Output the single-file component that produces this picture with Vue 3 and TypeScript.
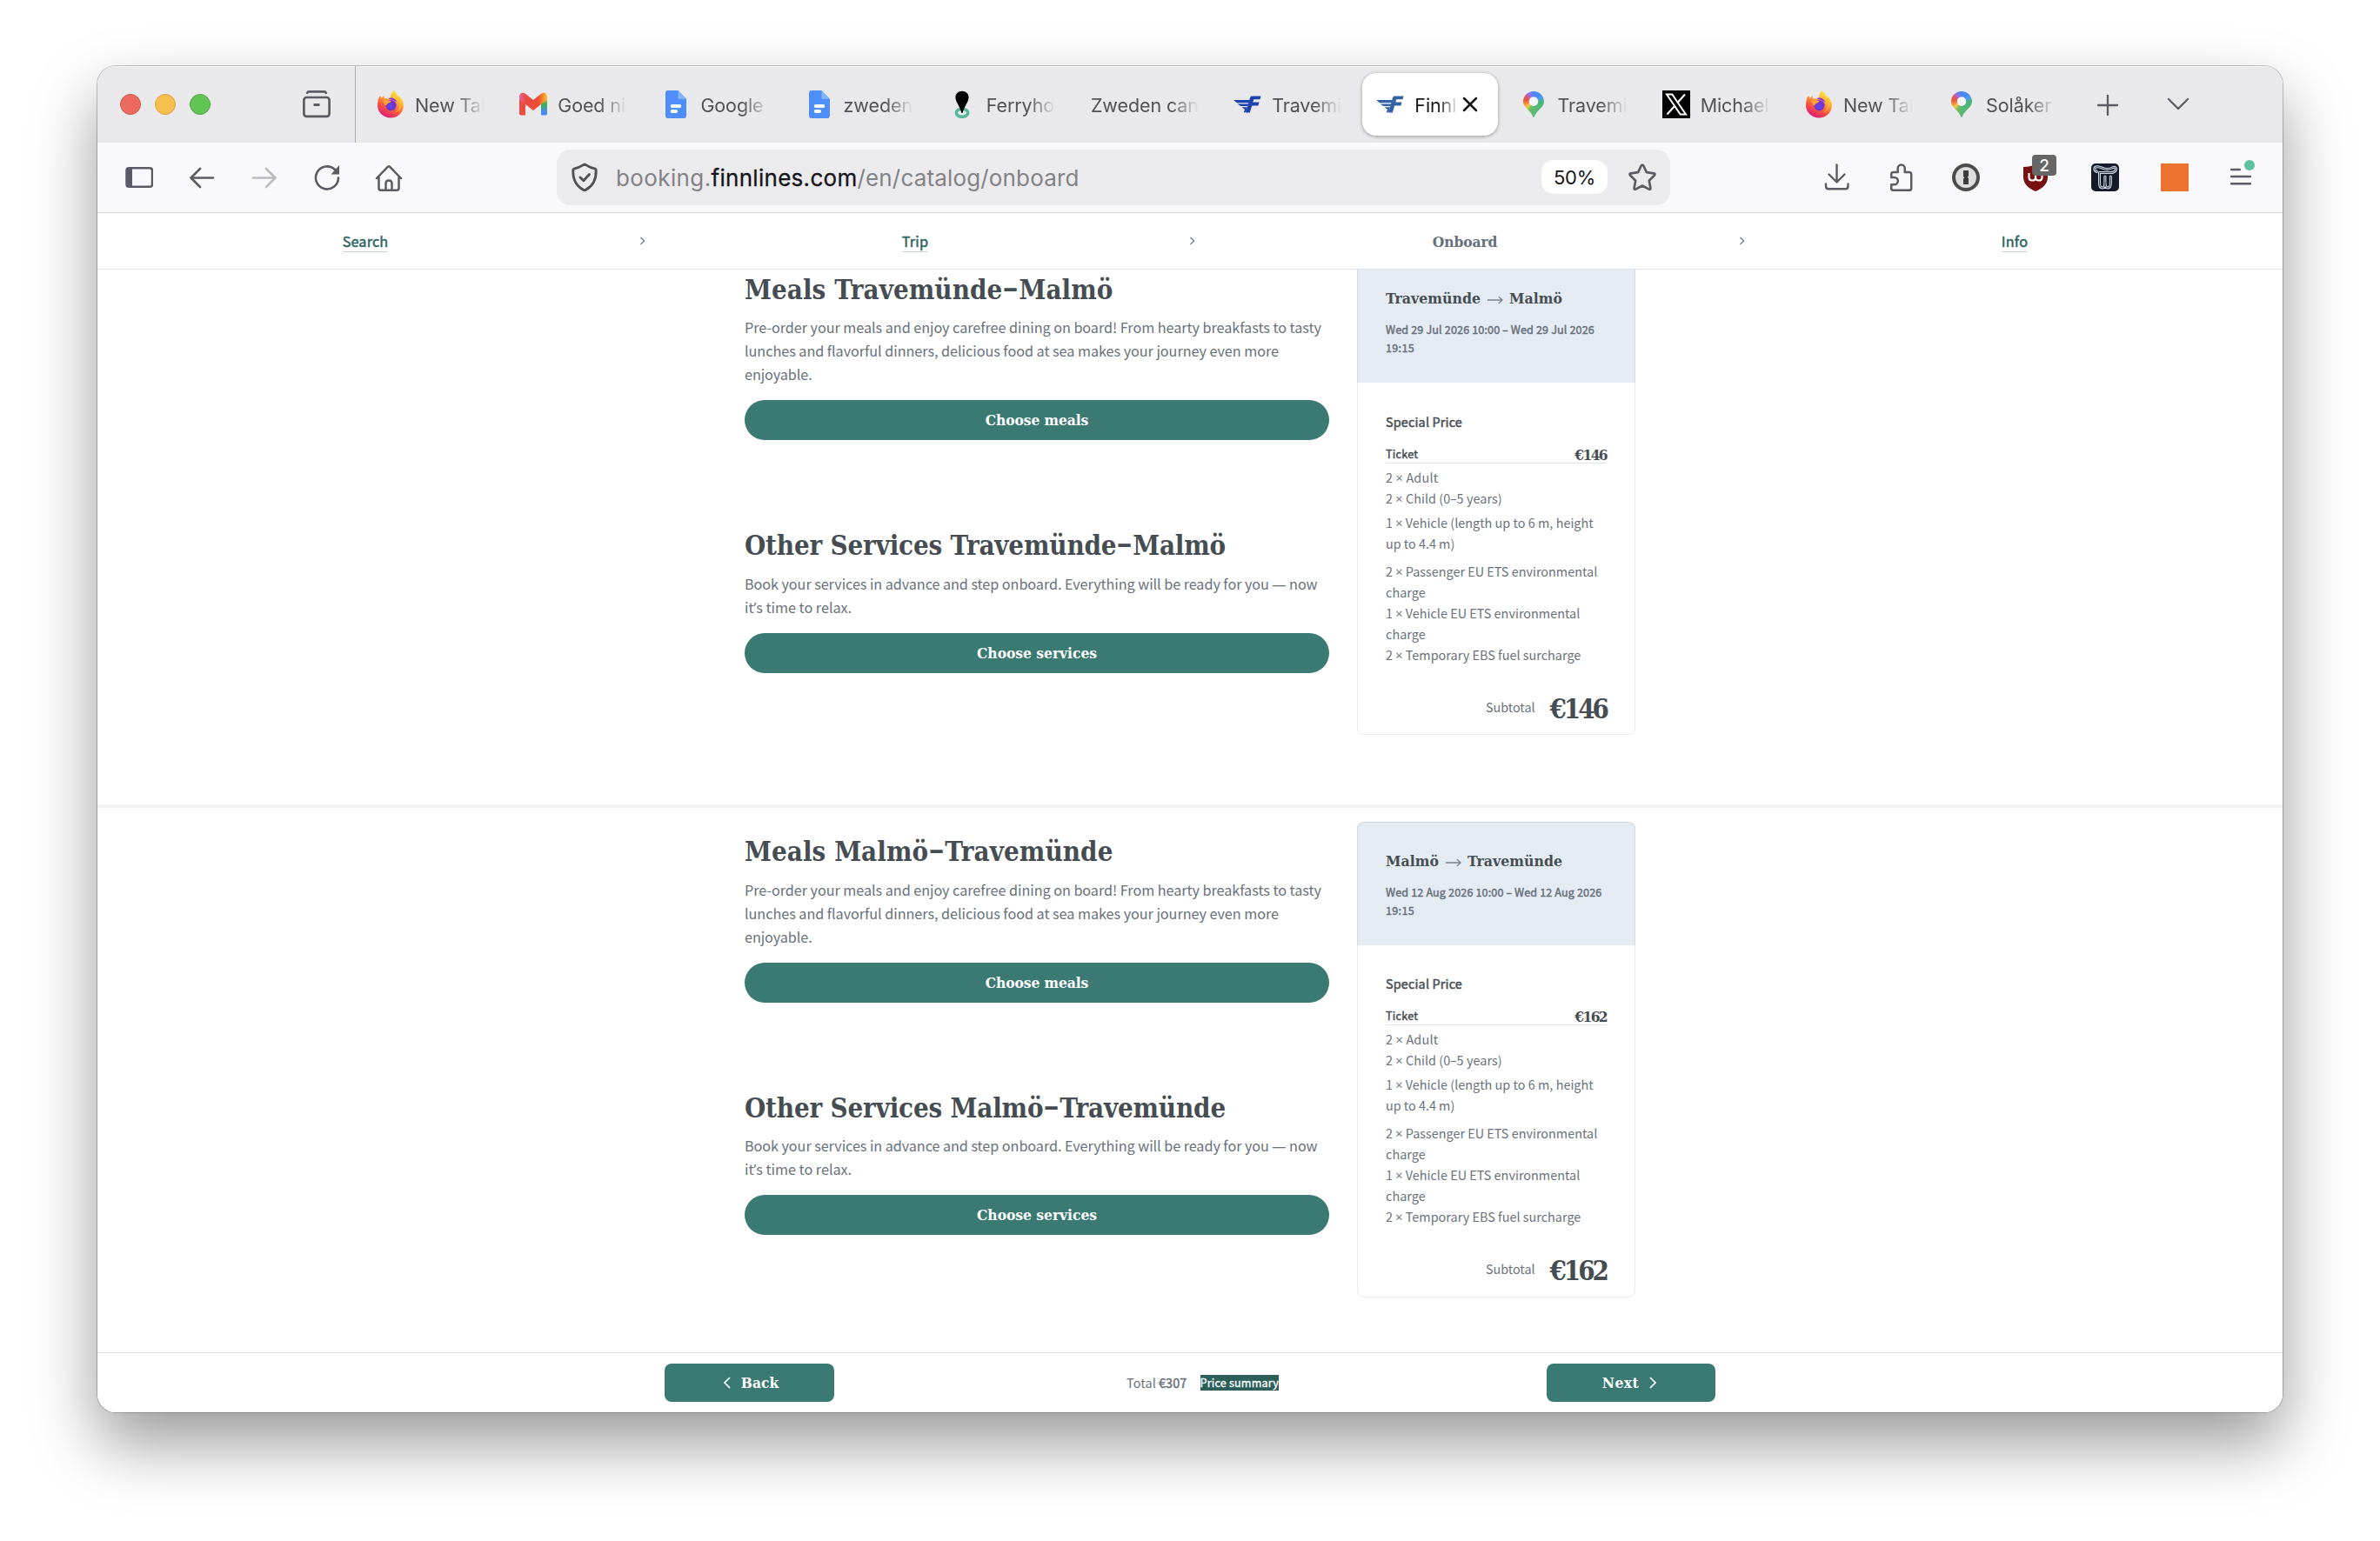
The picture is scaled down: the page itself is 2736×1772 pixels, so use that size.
<script setup lang="ts">
import { defineComponent, h, onMounted, ref } from 'vue'

// One line of text whose tracking is tuned to a given advance width.
const Fit = defineComponent({
  props: { text: { type: String, required: true }, w: { type: Number, required: true } },
  setup(props) {
    const el = ref<HTMLElement | null>(null)
    onMounted(() => {
      const node = el.value
      if (!node) return
      const natural = node.getBoundingClientRect().width
      node.style.letterSpacing = `${(props.w + 1 - natural) / props.text.length}px`
    })
    return () =>
      h(
        'span',
        { ref: el, class: 'fit' },
        props.text.split(/([×’—–])/).map((part) => (/^[×’—–]$/.test(part) ? h('span', { class: 'sym' }, part) : part)),
      )
  },
})

interface Tab { title: string; icon: string; active?: boolean }
const tabs: Tab[] = [
  { title: 'New Tab', icon: 'firefox' },
  { title: 'Goed ni', icon: 'gmail' },
  { title: 'Google', icon: 'docs' },
  { title: 'zweden', icon: 'docs' },
  { title: 'Ferryho', icon: 'ferry' },
  { title: 'Zweden can', icon: '' },
  { title: 'Travemi', icon: 'finn' },
  { title: 'Finnl', icon: 'finn2', active: true },
  { title: 'Travemi', icon: 'maps' },
  { title: 'Michael', icon: 'x' },
  { title: 'New Tab', icon: 'firefox' },
  { title: 'Solåker', icon: 'maps' },
]

const steps = [
  { label: 'Search', w: 51.7 },
  { label: 'Trip', w: 29.5 },
  { label: 'Onboard', w: 73.5, current: true },
  { label: 'Info', w: 29.5 },
]

type Line = [string, number]
interface Leg {
  meals: Line; other: Line; from: Line; to: Line; dates: Line; price: string
}
const legs: Leg[] = [
  {
    meals: ['Meals Travemünde–Malmö', 422.5], other: ['Other Services Travemünde–Malmö', 552],
    from: ['Travemünde', 108], to: ['Malmö', 60], dates: ['Wed 29 Jul 2026 10:00 – Wed 29 Jul 2026', 239], price: '€146',
  },
  {
    meals: ['Meals Malmö–Travemünde', 422.5], other: ['Other Services Malmö–Travemünde', 552],
    from: ['Malmö', 60], to: ['Travemünde', 108], dates: ['Wed 12 Aug 2026 10:00 – Wed 12 Aug 2026', 247.5], price: '€162',
  },
]
const mealsText: Line[] = [
  ['Pre-order your meals and enjoy carefree dining on board! From hearty breakfasts to tasty', 662],
  ['lunches and flavorful dinners, delicious food at sea makes your journey even more', 613],
  ['enjoyable.', 76.7],
]
const otherText: Line[] = [
  ['Book your services in advance and step onboard. Everything will be ready for you — now', 657.5],
  ['it’s time to relax.', 122],
]
const items: Line[][] = [
  [['2 × Adult', 59.3], ['2 × Child (0–5 years)', 132.7]],
  [['1 × Vehicle (length up to 6 m, height', 237.7], ['up to 4.4 m)', 78.3]],
  [
    ['2 × Passenger EU ETS environmental', 242.3], ['charge', 44.7],
    ['1 × Vehicle EU ETS environmental', 222.3], ['charge', 44.7],
    ['2 × Temporary EBS fuel surcharge', 223.3],
  ],
]
</script>

<template>
  <div class="desktop">
    <svg class="defs" width="0" height="0">
      <defs>
        <linearGradient id="ffBody" x1="0.8" y1="0" x2="0.3" y2="1">
          <stop offset="0" stop-color="#fff14f" /><stop offset="0.35" stop-color="#ffb02e" />
          <stop offset="0.65" stop-color="#fb5a3c" /><stop offset="1" stop-color="#d9157a" />
        </linearGradient>
        <radialGradient id="ffGlobe" cx="0.5" cy="0.6" r="0.6">
          <stop offset="0" stop-color="#5a4be0" /><stop offset="0.6" stop-color="#7035d0" /><stop offset="1" stop-color="#a932d8" />
        </radialGradient>
        <linearGradient id="gmR" x1="0" y1="0" x2="0" y2="1"><stop offset="0.05" stop-color="#fbc02d" /><stop offset="0.45" stop-color="#35b25a" /><stop offset="0.85" stop-color="#4a8af8" /></linearGradient>
        <linearGradient id="gmM" x1="0" y1="0" x2="1" y2="0"><stop offset="0" stop-color="#e8609a" /><stop offset="0.25" stop-color="#ea4a3d" /><stop offset="0.7" stop-color="#ee5035" /><stop offset="1" stop-color="#fcc52c" /></linearGradient>
      </defs>
    </svg>
    <div class="window">
      <header class="tabbar">
        <div class="lights"><i class="red" /><i class="yellow" /><i class="green" /></div>
        <svg class="archive" width="32" height="32" viewBox="0 0 32 32" fill="none" stroke="#5b5b66" stroke-width="2.7" stroke-linecap="round">
          <path d="M5.2 2.8C5.6 1.8 6.4 1.4 7.6 1.4H24.4C25.6 1.4 26.4 1.8 26.8 2.8" /><rect x="1.4" y="8" width="29.2" height="21.8" rx="3" /><path d="M12.5 16.6h7" stroke-linecap="butt" stroke-width="3" />
        </svg>
        <nav class="tabs">
          <div v-for="(t, i) in tabs" :key="i" class="tab" :class="{ active: t.active }">
            <svg v-if="t.icon" class="fav" width="32" height="32" viewBox="0 0 32 32">
              <template v-if="t.icon === 'firefox'">
                <path d="M19.5 0c2 1.600 3.400 3.400 4 5.200 4.800 3 7.300 7.200 7.300 12.200C30.800 25.500 24.300 31.500 16 31.500S1 25 1 17c0-4.500 1-9 3-11l1.500 3L8.500 6l.5 3.500c2.500-.4 5 .2 6.500 1C15.300 7 16.500 2.500 19.500 0z" fill="url(#ffBody)" />
                <circle cx="16.400" cy="17" r="6.300" fill="url(#ffGlobe)" />
                <path d="M7 11.500c3-1.500 6 .8 9.500.3 0 2.200-2.500 2.700-4.300 3.500-.4 1.500-1.700 2.300-2.700 1.500z" fill="#ffa436" />
                <path d="M13 9c4-1.500 9 0 10.500 5-3.500-3.500-6.500-3-10.500-5z" fill="#8a35dd" />
                <path d="M25 9c3.500 6 2 13-4 16.500 6.500-1.500 9.300-9 4-16.500z" fill="#ffd83a" opacity=".7" />
              </template>
              <template v-else-if="t.icon === 'gmail'">
                <path d="M0 6v20.500c0 1.200.8 2 2 2h5V11.500z" fill="#ea4c3f" />
                <path d="M32 6v20.500c0 1.200-.8 2-2 2h-5V11.500z" fill="url(#gmR)" />
                <path d="M0 7C0 3 4 1.600 6.600 3.500L16 11l9.400-7.500C28 1.600 32 3 32 7v3.500L16 23 0 10.500z" fill="url(#gmM)" />
              </template>
              <template v-else-if="t.icon === 'docs'">
                <path d="M7 0h11.500L28 9.800V29a3 3 0 0 1-3 3H7a3 3 0 0 1-3-3V3a3 3 0 0 1 3-3z" fill="#4f8df7" />
                <path d="M18.500 0L28 9.800h-8a1.500 1.500 0 0 1-1.500-1.500z" fill="#83b6fb" />
                <rect x="9.800" y="16" width="12.400" height="4" rx="2" fill="#fff" /><rect x="9.800" y="22" width="8.200" height="4" rx="2" fill="#fff" />
              </template>
              <template v-else-if="t.icon === 'ferry'">
                <ellipse cx="16" cy="25.800" rx="6.700" ry="4.500" fill="none" stroke="#55b796" stroke-width="3.600" />
                <path d="M16 .8c4.300 0 7.600 3 7.600 7.200 0 5-4.300 8.500-7.100 18h-1C12.700 16.500 8.400 13 8.400 8 8.400 3.800 11.700.8 16 .8z" fill="#000" />
              </template>
              <g v-else-if="t.icon === 'finn' || t.icon === 'finn2'" :fill="t.icon === 'finn' ? '#1c42ad' : '#3461a5'" :class="{ soft: t.icon === 'finn2' }">
                <path d="M.3 11h18.500l-1 3.200H3.800zM4.600 15.400h12.600l-.8 2.700H8.300zM9.400 19.300h6.700l-1.900 6h-2.400l1.100-3.600z" />
                <path d="M20.500 6.500h11l-1 3.800h-7.200l-1 3.300h7.200l-1.100 3.900h-7.200l-2.400 8h-4.700l4.200-14.600c.5-2.300 1-3.600 2.200-4.400z" />
              </g>
              <template v-else-if="t.icon === 'maps'">
                <foreignObject x="4" y="1" width="24" height="31"><div class="pin" /></foreignObject>
                <circle cx="16" cy="12.600" r="5.300" fill="#f4f4f6" />
              </template>
              <template v-else>
                <rect width="32" height="32" fill="#000" />
                <path d="M5 4.500h6.300l15.700 23h-6.300zM26 4.500L17.600 14M14.300 17.800L5.400 27.500" fill="none" stroke="#fff" stroke-width="2" />
              </template>
            </svg>
            <span class="title">{{ t.title }}</span>
            <svg v-if="t.active" class="close" width="18" height="18" viewBox="0 0 18 18" stroke="#15141a" stroke-width="2.500" stroke-linecap="round"><path d="M2 2l14 14M16 2L2 16" /></svg>
          </div>
        </nav>
        <svg class="plus" width="26" height="26" viewBox="0 0 26 26" stroke="#5b5b66" stroke-width="2.300" stroke-linecap="round"><path d="M13 2v22M2 13h22" /></svg>
        <svg class="down" width="26" height="16" viewBox="0 0 26 16" fill="none" stroke="#5b5b66" stroke-width="2.400" stroke-linecap="round" stroke-linejoin="round"><path d="M2 2l11 11L24 2" /></svg>
      </header>

      <div class="toolbar">
        <div class="nav">
          <svg width="32" height="32" viewBox="0 0 32 32"><rect x="1.500" y="5.300" width="29.500" height="21.500" rx="2.800" fill="none" stroke="#5b5b66" stroke-width="2.500" /><path d="M1.500 7a2 2 0 0 1 2-2H8v22H3.500a2 2 0 0 1-2-2z" fill="#5b5b66" /></svg>
          <svg width="32" height="32" viewBox="0 0 32 32" fill="none" stroke="#5b5b66" stroke-width="2.700" stroke-linecap="round" stroke-linejoin="round"><path d="M14 6L3.500 16.500 14 27M3.500 16.500H29" /></svg>
          <svg width="32" height="32" viewBox="0 0 32 32" fill="none" stroke="#bbbbc1" stroke-width="2.700" stroke-linecap="round" stroke-linejoin="round"><path d="M18 6l10.500 10.500L18 27M28.500 16.500H3" /></svg>
          <svg width="32" height="32" viewBox="0 0 32 32"><path d="M29 16.500A13 13 0 1 1 25 7" fill="none" stroke="#5b5b66" stroke-width="2.600" stroke-linecap="round" /><path d="M30 2v10.500H20.500z" fill="#5b5b66" /></svg>
          <svg class="home" width="32" height="32" viewBox="0 0 32 32" fill="none" stroke="#5b5b66" stroke-width="2.500" stroke-linecap="round" stroke-linejoin="round"><path d="M2 17L15 3.700q1-1 2 0L30 17M4.500 15v13.500q0 2.200 2.200 2.200h18.600q2.200 0 2.200-2.200V15M12.500 30.500V23q0-3.500 3.500-3.500t3.500 3.500v7.500" /></svg>
        </div>
        <div class="urlbar">
          <svg class="shield" width="32" height="34" viewBox="0 0 32 34" fill="none" stroke="#4f4f57" stroke-width="2.900" stroke-linecap="round" stroke-linejoin="round"><path d="M16 2.200q1 0 2 .7c3 2 6 3.300 9.500 4q1.700.4 1.700 2.200C29.500 19 25 27 17.500 31.300q-1.500.9-3 0C7 27 2.500 19 2.800 9.100q0-1.800 1.700-2.200c3.500-.7 6.500-2 9.500-4q1-.7 2-.7z" /><path d="M11 17l3.800 3.800 6.700-7.300" /></svg>
          <div class="url"><Fit text="booking." :w="108.500" /><b><Fit text="finnlines.com" :w="167" /></b><Fit text="/en/catalog/onboard" :w="254" /></div>
          <div class="zoom">50%</div>
          <svg class="star" width="34" height="34" viewBox="0 0 34 34" fill="none" stroke="#5b5b66" stroke-width="2.700" stroke-linejoin="round"><path d="M15.700 3.500q1.300-2 2.600 0l3.600 7.600 8.300 1.200q2.200.4.800 2.200l-6.200 6.200 1.600 8.500q.2 2.200-1.800 1.400L17 26.500l-7.600 4.100q-2 .8-1.800-1.400l1.600-8.500L3 14.500q-1.400-1.800.8-2.200l8.300-1.200z" /></svg>
        </div>
        <div class="tools">
          <svg width="32" height="32" viewBox="0 0 32 32" fill="none" stroke="#5b5b66" stroke-width="2.400" stroke-linecap="round" stroke-linejoin="round"><path d="M15.500 1.500V21M6.500 12.500l9 9 9-9M3 23.500v2.700q0 3 3 3h19.500q3 0 3-3v-2.700" /></svg>
          <svg class="addons" width="32" height="32" viewBox="0 0 32 32" fill="none" stroke="#5b5b66" stroke-width="2.500" stroke-linejoin="round"><path d="M5.200 16V12.500q0-2.500 2.500-2.500h5V5.500a4 4 0 0 1 8 0V10h5q2.500 0 2.500 2.500v16q0 2.300-2.500 2.300h-18q-2.500 0-2.500-2.300V24.200h3.500a4.100 4.100 0 0 0 0-8.200z" /></svg>
          <svg class="onepass" width="32" height="32" viewBox="0 0 32 32"><circle cx="16" cy="16" r="14" fill="#dedede" stroke="#4c4c4c" stroke-width="4" /><path d="M13 8h6v6.500l-1.300 1.300L19 17v7h-6v-6.500l1.300-1.300L13 15z" fill="#3c3c3c" /></svg>
          <div class="ublock">
            <svg width="32" height="32" viewBox="0 0 32 32"><path d="M2 3q8 0 14-3 6 3 14 3v12q0 11-14 17Q2 26 2 15z" fill="#780f10" transform="translate(0 1) scale(1 .97)" /><path d="M8.500 11v5q0 3.500 3.800 3.500T16 16v-5M16 16q0 3.500 3.800 3.500t3.700-3.500v-3" fill="none" stroke="#fff" stroke-width="2.200" /></svg>
            <span class="badge">2</span>
          </div>
          <svg class="wide" width="32" height="32" viewBox="0 0 32 32"><rect width="32" height="32" rx="5" fill="#141a28" /><g fill="none" stroke-linecap="round" stroke-linejoin="round"><path d="M6.500 9.500C2.500 8 3 3.500 7.500 3.800 12 4 14 7 19 6.500 24 6 25 3.500 27.500 4.500 30 6 28 10.500 22.500 10.500H9.500V22q0 6 3.200 6t3.200-6V15M16 22q0 6 3.200 6t3.200-6V15" stroke="#cfd9ee" stroke-width="3" /><path d="M6.500 9.500C2.500 8 3 3.500 7.500 3.800 12 4 14 7 19 6.500 24 6 25 3.500 27.500 4.500 30 6 28 10.500 22.500 10.500H9.500V22q0 6 3.200 6t3.200-6V15M16 22q0 6 3.200 6t3.200-6V15" stroke="#141a28" stroke-width=".8" /></g></svg>
          <i class="orange" />
          <svg class="menu" width="32" height="38" viewBox="0 0 32 38"><path d="M5.200 17h9.600M5.200 25h21.600M5.200 33.300h21.600" stroke="#5b5b66" stroke-width="2.500" stroke-linecap="round" /><circle cx="26" cy="12" r="6" fill="#5cc3a1" /></svg>
        </div>
      </div>

      <nav class="steps">
        <template v-for="(s, i) in steps" :key="s.label">
          <svg v-if="i" class="sep" width="16" height="12" viewBox="0 0 16 12" fill="none" stroke="#7a8590" stroke-width="1.500"><path d="M8.500 2l4 4-4 4" /></svg>
          <div class="step"><span :class="s.current ? 'current' : 'link'"><Fit :text="s.label" :w="s.w" /></span></div>
        </template>
      </nav>

      <main class="page">
        <div class="scroll">
          <section v-for="leg in legs" :key="leg.price" class="leg">
            <div class="choices">
              <h2><Fit :text="leg.meals[0]" :w="leg.meals[1]" /></h2>
              <p><Fit v-for="l in mealsText" :key="l[0]" :text="l[0]" :w="l[1]" /></p>
              <button class="pill"><Fit text="Choose meals" :w="117.500" /></button>
              <h2 class="second"><Fit :text="leg.other[0]" :w="leg.other[1]" /></h2>
              <p><Fit v-for="l in otherText" :key="l[0]" :text="l[0]" :w="l[1]" /></p>
              <button class="pill"><Fit text="Choose services" :w="137" /></button>
            </div>
            <aside class="card">
              <div class="head">
                <div class="route">
                  <Fit :text="leg.from[0]" :w="leg.from[1]" />
                  <svg width="18" height="10" viewBox="0 0 18 10" fill="none" stroke="#7a848e" stroke-width="1.500"><path d="M0 5h17M13 1.200L17 5l-4 3.800" /></svg>
                  <Fit :text="leg.to[0]" :w="leg.to[1]" />
                </div>
                <div class="dates semi"><Fit :text="leg.dates[0]" :w="leg.dates[1]" /><Fit text="19:15" :w="32" /></div>
              </div>
              <div class="body">
                <div class="special semi"><Fit text="Special Price" :w="87" /></div>
                <div class="ticket"><span class="name semi"><Fit text="Ticket" :w="36.300" /></span><span class="amount"><Fit :text="leg.price" :w="35.700" /></span></div>
                <div v-for="(g, i) in items" :key="i" class="group"><Fit v-for="(l, j) in g" :key="j" :text="l[0]" :w="l[1]" /></div>
                <div class="subtotal"><span class="label"><Fit text="Subtotal" :w="55.500" /></span><span class="sum"><Fit :text="leg.price" :w="64.500" /></span></div>
              </div>
            </aside>
          </section>
        </div>
      </main>

      <footer class="foot">
        <button class="btn back"><svg width="10" height="14" viewBox="0 0 10 14" fill="none" stroke="#fff" stroke-width="1.700"><path d="M8 1L2 7l6 6" /></svg><Fit text="Back" :w="42.500" /></button>
        <div class="total"><Fit text="Total" :w="33" /><b class="semi"><Fit text="€307" :w="31.500" /></b><span class="summary semi"><Fit text="Price summary" :w="89.500" /></span></div>
        <button class="btn next"><Fit text="Next" :w="41.500" /><svg width="10" height="14" viewBox="0 0 10 14" fill="none" stroke="#fff" stroke-width="1.700"><path d="M2 1l6 6-6 6" /></svg></button>
      </footer>
    </div>
  </div>
</template>

<style>
body { background: #fff; }
.fit { display: inline-block; white-space: pre; }
.fit .sym { font-family: "Open Sans", "Noto Sans", sans-serif; line-height: 1; }
h2 .fit .sym { display: inline-block; padding: 0 2.500px; font-family: inherit; transform: translateY(-2.500px) scaleX(1.300); }
</style>

<style scoped>
.desktop { box-sizing: border-box; width: 2736px; height: 1772px; padding: 76px 112px 148px; overflow: hidden; font-family: "Noto Sans CJK JP", "Noto Sans", sans-serif; }
.defs { position: absolute; }
.window { display: flex; flex-direction: column; width: 2512px; height: 1548px; border-radius: 21px; overflow: hidden; background: #fff; box-shadow: 0 0 0 1px rgba(0, 0, 0, .22), 0 36px 76px rgba(0, 0, 0, .4); }
svg { flex: none; display: block; }
.semi { font-weight: 400; -webkit-text-stroke: .45px currentColor; }

.tabbar { display: flex; align-items: center; height: 88px; flex: none; background: #e9e9eb; box-shadow: inset 0 2px 1px -1px #f8f8f8; font-family: Inter, sans-serif; }
.lights { display: flex; gap: 16px; margin-left: 26px; }
.lights i { box-sizing: border-box; width: 24px; height: 24px; border-radius: 50%; }
.red { background: #ed6a5f; border: 1px solid #d55549; }
.yellow { background: #f5bf4f; border: 1px solid #dba23b; }
.green { background: #61c554; border: 1px solid #4ba73d; }
.archive { margin-left: 106px; }
.tabs { display: flex; gap: 8.200px; height: 88px; align-items: center; margin-left: 28px; padding-left: 8px; border-left: 1px solid #acacaf; }
.tab { box-sizing: border-box; display: flex; align-items: center; width: 156px; height: 72px; padding: 0 16px; border-radius: 16px; color: #515156; font-size: 21.500px; letter-spacing: -.100px; }
.tab.active { background: #fff; color: #15141a; box-shadow: 0 1px 4px rgba(0, 0, 0, .35); }
.fav { margin-right: 12px; }
.soft { filter: blur(.6px); }
.title { flex: 1; min-width: 0; overflow: hidden; white-space: nowrap; line-height: 32px; margin-top: 2px; -webkit-mask-image: linear-gradient(to left, transparent 0, #000 32px); mask-image: linear-gradient(to left, transparent 0, #000 32px); }
.active .title { -webkit-mask-image: linear-gradient(to left, transparent 0, #000 24px); mask-image: linear-gradient(to left, transparent 0, #000 24px); }
.close { margin: 0 7px 0 4px; }
.pin { width: 24px; height: 30px; background: conic-gradient(from 0deg at 50% 39%, #4a8af4 0 12%, #4f9cf0 18%, #45b576 25%, #5bb974 50%, #6dbf5c 57%, #f7cb4d 64%, #f0813f 72%, #e8543f 79%, #d05b8e 86%, #8a74ee 92%, #4a8af4 100%); clip-path: path("M12 0C18.700 0 24 5.200 24 11.800 24 19 16 21 12.600 29.500 12.400 30.100 11.600 30.100 11.400 29.500 8 21 0 19 0 11.800 0 5.200 5.300 0 12 0z"); }
.plus { margin-left: 31px; margin-top: 2px; }
.down { margin-left: 55px; }

.toolbar { box-sizing: border-box; display: flex; align-items: center; height: 81px; flex: none; padding-bottom: 1px; background: #f9f9fb; border-bottom: 1px solid #d5d5d9; }
.nav { display: flex; gap: 40px; margin-left: 32px; }
.home { margin-left: -1px; }
.urlbar { display: flex; align-items: center; width: 1280px; height: 64px; margin-left: 177px; border-radius: 16px; background: #ebebed; font-family: Inter, sans-serif; }
.shield { margin-left: 16px; }
.url { display: flex; flex: 1; margin-left: 20px; margin-top: 3px; font-size: 26px; line-height: 36px; color: #828286; }
.url b { color: #15141a; font-weight: 400; -webkit-text-stroke: .3px #15141a; }
.zoom { width: 76px; height: 39px; border-radius: 14px; background: #fff; color: #15141a; font-size: 22px; line-height: 41px; text-align: center; letter-spacing: -.3px; }
.star { margin: 0 15px 0 23px; }
.tools { display: flex; align-items: center; margin-left: auto; margin-right: 32px; }
.addons { margin-left: 41px; }
.onepass { margin-left: 43px; }
.ublock { position: relative; margin-left: 48px; }
.badge { position: absolute; left: 12px; top: -10px; width: 28px; height: 24px; border-radius: 4px; background: #666; color: #fff; font: 500 19px/25px Inter, sans-serif; text-align: center; }
.wide { margin-left: 48px; }
.orange { width: 32px; height: 32px; margin-left: 48px; background: #ed722e; }
.menu { margin: -14px 0 0 44px; }

.steps { box-sizing: border-box; display: flex; align-items: center; height: 65px; flex: none; border-bottom: 1px solid #e3e5e7; }
.step { width: 616px; display: flex; justify-content: center; }
.sep { overflow: visible; }
.link { height: 25px; border-bottom: 1px solid #c6d2dc; color: #2d665f; font-size: 16.200px; -webkit-text-stroke: .5px currentColor; line-height: 26px; }
.current { color: #66707a; font: 600 17.300px/26px "DejaVu Serif Condensed", "DejaVu Serif", serif; font-stretch: condensed; margin-top: 1px; }

.page { flex: 1; min-height: 0; overflow: hidden; }
.scroll { margin-top: -27.500px; }
.leg { box-sizing: border-box; display: flex; align-items: flex-start; gap: 32px; height: 646.500px; padding: 16px 0 0 744px; border-bottom: 4px solid #f1f3f6; }
.leg:last-child { border-bottom: 0; }
.choices { width: 672px; padding-top: 14px; }
h2 { margin: 0 0 10.600px; height: 40px; color: #464d52; font: 700 31px/40px "DejaVu Serif Condensed", "DejaVu Serif", serif; font-stretch: condensed; }
h2.second { margin-top: 101px; }
p { display: flex; flex-direction: column; align-items: flex-start; margin: 0 0 16px; color: #69727b; font-size: 16.200px; line-height: 27px; }
.pill { display: flex; justify-content: center; align-items: center; width: 672px; height: 46px; padding: 0; border: 0; border-radius: 23px; background: #3a7a73; color: #fff; font: 700 17.300px/26px "DejaVu Serif Condensed", "DejaVu Serif", serif; font-stretch: condensed; }

.card { box-sizing: border-box; width: 320px; height: 546.500px; border: 1px solid #e5ebf3; border-radius: 8px; background: #fff; }
.head { box-sizing: border-box; margin: -1px -1px 0; height: 141.500px; padding: 29.700px 32px 0; border: 1px solid #cfdae7; border-bottom: 0; border-radius: 8px 8px 0 0; background: #e5ebf3; }
.route { display: flex; align-items: center; gap: 7.500px; height: 28px; margin-bottom: 11px; color: #464d52; font: 700 17.500px/28px "DejaVu Serif Condensed", "DejaVu Serif", serif; font-stretch: condensed; }
.route svg { margin-top: 4px; }
.dates { display: flex; flex-direction: column; align-items: flex-start; color: #66707a; font-size: 12.600px; line-height: 21px; }
.body { padding: 32.500px 32px 0; color: #69727b; font-size: 14.400px; line-height: 24px; }
.special { height: 24px; color: #464d52; }
.ticket { display: flex; justify-content: space-between; align-items: flex-end; height: 35px; border-bottom: 1px solid #e0e4e7; color: #464d52; }
.name { display: flex; font-size: 12.600px; line-height: 20px; }
.amount { display: flex; font: 700 17.300px/18px "DejaVu Serif Condensed", "DejaVu Serif", serif; font-stretch: condensed; }
.group { display: flex; flex-direction: column; align-items: flex-start; margin-top: 4px; }
.group:nth-of-type(5) { margin-top: 8px; }
.subtotal { display: flex; justify-content: flex-end; gap: 17px; margin-top: 30px; }
.label { margin-top: 6px; }
.sum { display: flex; color: #464d52; font: 700 31px/40px "DejaVu Serif Condensed", "DejaVu Serif", serif; font-stretch: condensed; }

.foot { box-sizing: border-box; display: flex; justify-content: space-between; align-items: flex-start; height: 69px; flex: none; padding: 12px 652px 0; border-top: 1px solid #e3e5e7; background: #fff; }
.btn { box-sizing: border-box; display: flex; align-items: center; justify-content: center; gap: 10.500px; width: 194.500px; height: 44px; padding: 0; border: 0; border-radius: 8px; background: #3a7a73; color: #fff; font: 700 17.300px/26px "DejaVu Serif Condensed", "DejaVu Serif", serif; font-stretch: condensed; }
.back { padding-left: 4px; }
.next { padding-right: 3px; }
.btn svg { margin-bottom: 1px; }
.total { display: flex; align-items: center; height: 44px; margin-left: 29px; color: #69727b; font-size: 14.400px; line-height: 24px; }
.total b { margin-left: 3px; }
.summary { height: 18px; margin-left: 15px; background: #2c5f59; color: #fff; font-size: 12.600px; line-height: 18px; }
.summary.semi { -webkit-text-stroke-width: .3px; }
.summary .fit { display: block; }
</style>
